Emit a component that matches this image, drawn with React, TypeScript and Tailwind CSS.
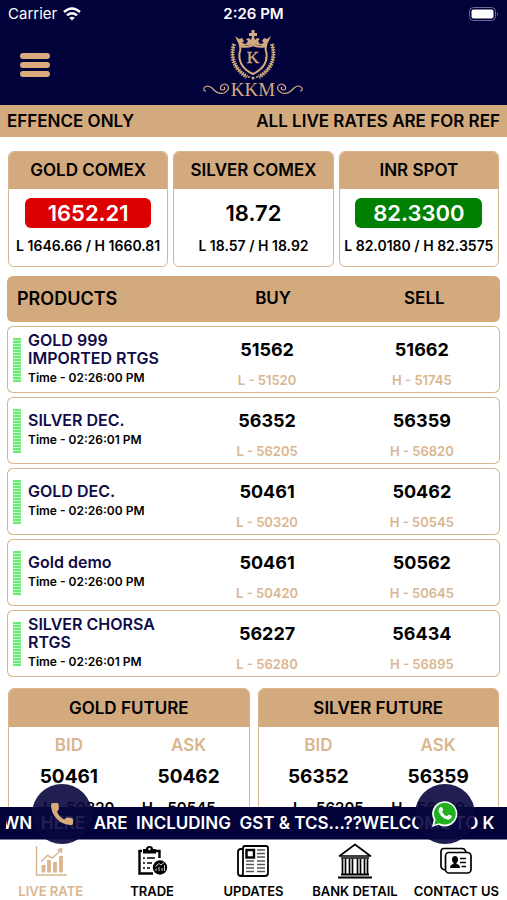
import type { ReactNode } from "react";

const rates = [
  { name: "GOLD COMEX", value: "1652.21", low: "1646.66", high: "1660.81", color: "bg-[#dd0000] text-white" },
  { name: "SILVER COMEX", value: "18.72", low: "18.57", high: "18.92", color: "text-black" },
  { name: "INR SPOT", value: "82.3300", low: "82.0180", high: "82.3575", color: "bg-[#008000] text-white" },
];

const products = [
  { name: "GOLD 999 IMPORTED RTGS", time: "02:26:00 PM", buy: "51562", sell: "51662", low: "51520", high: "51745" },
  { name: "SILVER DEC.", time: "02:26:01 PM", buy: "56352", sell: "56359", low: "56205", high: "56820" },
  { name: "GOLD DEC.", time: "02:26:00 PM", buy: "50461", sell: "50462", low: "50320", high: "50545" },
  { name: "Gold demo", time: "02:26:00 PM", buy: "50461", sell: "50562", low: "50420", high: "50645" },
  { name: "SILVER CHORSA RTGS", time: "02:26:01 PM", buy: "56227", sell: "56434", low: "56280", high: "56895" },
];

const futures = [
  { name: "GOLD FUTURE", bid: "50461", ask: "50462", low: "50320", high: "50545" },
  { name: "SILVER FUTURE", bid: "56352", ask: "56359", low: "56205", high: "56820" },
];

const Logo = () => (
  <svg viewBox="0 0 102 72" className="w-[102px] h-[72px]" fill="none" stroke="#d3aa7e" role="img" aria-label="KKM">
    {/* crown */}
    <path
      d="M38 18 L33 7 L37 10 L40 9 L42 12 L40 14 L44 15 L46 12 L44 10 L47 9 L49 11 L50 7 L47 7 V4 H49.500 V1 H52.500 V4 H55 V7 L52 7 L53 11 L55 9 L58 10 L56 12 L58 15 L62 14 L60 12 L62 9 L65 10 L69 7 L64 18 Q51 13 38 18Z"
      fill="#d3aa7e"
      stroke="none"
    />
    {/* shield */}
    <path d="M38 17 Q45 19 51 16 Q57 19 64 17 Q63 21 64.500 24 Q66 38 51 45 Q36 38 37.500 24 Q39 21 38 17Z" strokeWidth="2" />
    {/* wreath */}
    <path d="M32 15 Q26 36 45 48" strokeWidth="4" strokeDasharray="1.500 1" />
    <path d="M70 15 Q76 36 57 48" strokeWidth="4" strokeDasharray="1.500 1" />
    <path d="M32 15 Q26 36 45 48 M70 15 Q76 36 57 48" strokeWidth="1.2" />
    <circle cx="51" cy="49" r="1.5" fill="#d3aa7e" stroke="none" />
    <circle cx="47" cy="48" r="1" fill="#d3aa7e" stroke="none" />
    <circle cx="55" cy="48" r="1" fill="#d3aa7e" stroke="none" />
    <text x="51" y="34" textAnchor="middle" fontSize="17" fontFamily="Liberation Serif, serif" fill="#d3aa7e" stroke="#d3aa7e" strokeWidth="0.4">
      K
    </text>
    <text x="51" y="67" textAnchor="middle" fontSize="19" fontFamily="Liberation Serif, serif" fill="#d3aa7e" stroke="none">
      KKM
    </text>
    {/* flourishes */}
    <path
      d="M4 62 Q1 62 2 59 Q5 55 10 59 Q16 66 22 64 Q28 61 26 57 Q23 53 19 57 Q17 61 21 61 Q24 60 22 58"
      strokeWidth="1.2"
    />
    <path
      d="M98 62 Q101 62 100 59 Q97 55 92 59 Q86 66 80 64 Q74 61 76 57 Q79 53 83 57 Q85 61 81 61 Q78 60 80 58"
      strokeWidth="1.2"
    />
  </svg>
);

const WifiIcon = () => (
  <svg viewBox="0 0 18 14" className="w-[18px] h-[14px]" fill="none" stroke="white" strokeWidth="2.4">
    <path d="M1 5 Q9 -2 17 5" />
    <path d="M4 8.300 Q9 4 14 8.300" />
    <path d="M9 13.500 L6.200 10.800 Q9 8.500 11.800 10.800Z" fill="white" stroke="none" />
  </svg>
);

const BatteryIcon = () => (
  <svg viewBox="0 0 30 14" className="w-[30px] h-[14px]" fill="none">
    <rect x="0.500" y="0.500" width="26" height="13" rx="4" stroke="#6d6d92" />
    <rect x="2.500" y="2.500" width="22" height="9" rx="2" fill="white" />
    <path d="M28 5 Q30 7 28 9Z" fill="#6d6d92" />
  </svg>
);

const LiveRateIcon = () => (
  <svg viewBox="0 0 32 32" className="w-8 h-8" fill="none" stroke="currentColor">
    <path d="M1.500 1 V30 H32" strokeWidth="1.4" />
    <path d="M8.500 20 V27.500 M14 15 V27.500 M20 17 V27.500 M26 11 V27.500" strokeWidth="3.8" />
    <path d="M6 16.500 L12.500 10.500 L17.500 13 L25.500 5.500" strokeWidth="1.5" />
    <path d="M22 4.500 L27.500 2.500 L27 8.500Z" fill="currentColor" stroke="none" />
  </svg>
);

const TradeIcon = () => (
  <svg viewBox="0 0 32 32" className="w-8 h-8" fill="none" stroke="currentColor">
    <path d="M6 6 H3.500 V28.500 H17 M20 6 H23.500 V13" strokeWidth="2.4" />
    <path d="M7 8.500 V4 H10 Q10 1 13.500 1 Q17 1 17 4 H20 V8.500Z" fill="currentColor" stroke="none" />
    <circle cx="13.500" cy="4" r="1.2" fill="white" stroke="none" />
    <path d="M7 13 H9 M11 13 H19 M7 18 H9 M11 18 H16 M7 23 H9 M11 23 H14" strokeWidth="1.600" />
    <circle cx="24" cy="22.500" r="7.200" fill="currentColor" stroke="none" />
    <path d="M20 26 V23.500 M23 26 V22 M26 26 V23 M28.500 26 V20 M19.500 21.500 L23 18.500 L25 20 L28 17.500" stroke="white" strokeWidth="0.8" />
  </svg>
);

const UpdatesIcon = () => (
  <svg viewBox="0 0 32 32" className="w-8 h-8" fill="none" stroke="currentColor" strokeWidth="1.8">
    <path d="M6 4 H4 Q1 4 1 7 V28 Q1 31 4 31 H28 Q31 31 31 28 V3 Q31 1 29 1 H8 Q6 1 6 3 V28 Q6 31 3.500 31" />
    <rect x="9.500" y="5" width="7.500" height="7.500" strokeWidth="2.4" />
    <path
      d="M20 5 H28 M20 8.500 H28 M20 12 H28 M9 16 H17 M20 16 H28 M9 19.500 H17 M20 19.500 H28 M9 23 H17 M20 23 H28 M9 26.500 H17 M20 26.500 H28"
      stroke="#555"
      strokeWidth="1.300"
    />
  </svg>
);

const BankIcon = () => (
  <svg viewBox="0 0 34 36" className="w-[34px] h-9" fill="none" stroke="currentColor">
    <path d="M1.500 13 L17 1.500 L32.500 13 Z" strokeWidth="1.700" strokeLinejoin="round" />
    <path d="M3 15 H31" strokeWidth="1.500" />
    <path d="M4.500 16 V31 M7.500 16 V31 M11.500 16 V31 M14.500 16 V31 M19.500 16 V31 M22.500 16 V31 M26.500 16 V31 M29.500 16 V31" strokeWidth="1.700" />
    <path d="M3 31.500 H31 M0 34.500 H34" strokeWidth="1.800" />
  </svg>
);

const ContactIcon = () => (
  <svg viewBox="0 0 32 28" className="w-8 h-7" fill="none" stroke="currentColor" strokeWidth="1.7">
    <path d="M5 23 Q1 22 1 19 V4.500 Q1 1.500 4 1.500 H22 Q25 1.500 26 5" />
    <rect x="5.500" y="5.500" width="25.500" height="20.500" rx="3.500" />
    <ellipse cx="15" cy="12.500" rx="3" ry="3.500" fill="currentColor" stroke="none" />
    <path d="M10 21 Q10 17.500 13.500 17 V15 H16.500 V17 Q20 17.500 20 21Z" fill="currentColor" stroke="none" />
    <path d="M20 11.500 H26 M20 15.500 H26 M21.500 19.500 H26" strokeWidth="1.600" />
  </svg>
);

const PhoneIcon = () => (
  <svg viewBox="0 0 24 24" className="w-6 h-6" fill="#d9ab7c">
    <path d="M1 3 Q1 1 3 1 H7.500 Q8.500 1 8.500 3 L9 6 Q9 8 7 9.500 Q8 12.500 10.500 15 Q12.500 16.500 14.500 17.500 Q15.500 15.500 18 15.500 L21.500 16 Q23 16.500 23 18 V21.500 Q23 23.500 20 23 Q11 22 6 16 Q1 10 1 3Z" />
  </svg>
);

const WhatsAppIcon = () => (
  <svg viewBox="0 0 30 30" className="w-7 h-[30px]">
    <path d="M1 29 L3 21.500 A13.500 13.500 0 1 1 8 26.500Z" fill="white" />
    <path d="M3.500 26.500 L5 21 A11.700 11.700 0 1 1 9 24.800Z" fill="#1fb01f" />
    <path
      d="M10 7.500 Q11 7 12 8 L13 10.500 Q13 11.500 11.800 12.500 Q13.500 16 17 17.500 L18.700 15.800 Q19.200 15.500 22 17 Q22.500 17.500 22 19 Q20.500 21.500 17.500 20.800 Q11 19 8.500 13 Q7.500 9.500 10 7.500Z"
      fill="white"
    />
  </svg>
);

const tabs: { label: string; icon: ReactNode; active?: boolean }[] = [
  { label: "LIVE RATE", icon: <LiveRateIcon />, active: true },
  { label: "TRADE", icon: <TradeIcon /> },
  { label: "UPDATES", icon: <UpdatesIcon /> },
  { label: "BANK DETAIL", icon: <BankIcon /> },
  { label: "CONTACT US", icon: <ContactIcon /> },
];

const App = () => {
  return (
    <div className="h-screen flex flex-col overflow-hidden bg-white text-black font-['Inter',sans-serif]">
      <header className="shrink-0 bg-[#02023a]">
        <div className="grid grid-cols-3 items-center h-7 px-2 text-[15px] text-white">
          <div className="flex items-center gap-[6px]">
            Carrier
            <WifiIcon />
          </div>
          <div className="text-center font-semibold">2:26 PM</div>
          <div className="flex justify-end">
            <BatteryIcon />
          </div>
        </div>
        <div className="grid grid-cols-3 items-center h-[77px] px-5">
          <button type="button" aria-label="Menu" className="flex flex-col gap-[3px] w-[30px] mb-1">
            <span className="h-[6px] w-full rounded-full bg-[#d9ab7c]" />
            <span className="h-[6px] w-full rounded-full bg-[#d9ab7c]" />
            <span className="h-[6px] w-full rounded-full bg-[#d9ab7c]" />
          </button>
          <div className="flex justify-center mb-1">
            <Logo />
          </div>
        </div>
      </header>

      <div className="shrink-0 bg-[#d3aa7e] px-[7px]">
        <div className="flex justify-between overflow-hidden whitespace-nowrap text-[17px] leading-8 font-semibold">
          <span>EFFENCE ONLY</span>
          <span>ALL LIVE RATES ARE FOR REF</span>
        </div>
      </div>

      <main className="flex-1 min-h-0 overflow-hidden pt-[14px]">
        <section className="grid grid-cols-3 gap-[5px] px-2">
          {rates.map((rate) => (
            <div key={rate.name} className="rounded-md border border-[#d9b48c] overflow-hidden text-center whitespace-nowrap">
              <h2 className="bg-[#d3aa7e] text-[17px] leading-[37px] font-semibold">{rate.name}</h2>
              <p className={`mx-auto mt-[9px] w-4/5 rounded-md text-[22px] leading-[30px] font-semibold ${rate.color}`}>{rate.value}</p>
              <p className="pt-2 pb-[10px] text-sm leading-5 font-semibold">
                L {rate.low} / H {rate.high}
              </p>
            </div>
          ))}
        </section>

        <section className="px-[7px] mt-[5px]">
          <table className="w-full table-fixed border-separate border-spacing-x-0 border-spacing-y-1">
            <thead>
              <tr className="h-[46px] bg-[#d3aa7e] text-[17px] font-semibold">
                <th className="w-[37%] rounded-l-md pl-[10px] text-left text-lg font-semibold">PRODUCTS</th>
                <th className="pl-3 font-semibold">BUY</th>
                <th className="rounded-r-md pl-1 font-semibold">SELL</th>
              </tr>
            </thead>
            <tbody>
              {products.map((product) => (
                <tr key={product.name} className="h-[67px]">
                  <td className="rounded-l-md border border-r-0 border-[#d9b48c] pl-[5px] py-0">
                    <div className="flex items-center gap-[7px]">
                      <span className="shrink-0 w-2 h-11 bg-[repeating-linear-gradient(to_bottom,#69ec75_0_2px,#c4fac8_2px_3px)]" />
                      <div>
                        <p className="w-[140px] text-base leading-[18px] font-semibold text-[#100c48]">{product.name}</p>
                        <p className="text-xs leading-[21px] font-semibold whitespace-nowrap">Time - {product.time}</p>
                      </div>
                    </div>
                  </td>
                  <td className="border-y border-[#d9b48c] p-0 text-center">
                    <p className="text-lg leading-10 font-bold">{product.buy}</p>
                    <p className="text-[13px] leading-5 font-semibold text-[#d9b68f]">L - {product.low}</p>
                  </td>
                  <td className="rounded-r-md border border-l-0 border-[#d9b48c] p-0 text-center">
                    <p className="text-lg leading-10 font-bold">{product.sell}</p>
                    <p className="text-[13px] leading-5 font-semibold text-[#d9b68f]">H - {product.high}</p>
                  </td>
                </tr>
              ))}
            </tbody>
          </table>
        </section>

        <section className="grid grid-cols-2 gap-2 px-2 mt-[7px]">
          {futures.map((future) => (
            <div key={future.name} className="rounded-md border border-[#d9b48c] overflow-hidden text-center font-semibold">
              <h2 className="bg-[#d3aa7e] text-[17px] leading-[38px]">{future.name}</h2>
              <div className="grid grid-cols-2">
                <div>
                  <p className="text-[17px] leading-9 text-[#d9b68f]">BID</p>
                  <p className="text-[19px] leading-7 font-bold">{future.bid}</p>
                  <p className="text-[15px] leading-[34px] pl-5">L - {future.low}</p>
                </div>
                <div>
                  <p className="text-[17px] leading-9 text-[#d9b68f]">ASK</p>
                  <p className="text-[19px] leading-7 font-bold">{future.ask}</p>
                  <p className="text-[15px] leading-[34px] pr-5">H - {future.high}</p>
                </div>
              </div>
            </div>
          ))}
        </section>
      </main>

      <footer className="relative shrink-0">
        <div className="bg-[#02023a] px-[6px] border-b border-[#7c7c9c]">
          <p className="-indent-1 overflow-hidden whitespace-pre text-[17px] leading-8 font-semibold text-white">
            {"WN  HERE  ARE  INCLUDING  GST & TCS...??WELCOME TO K"}
          </p>
        </div>
        <a
          href="#call"
          aria-label="Call"
          className="absolute left-8 -top-[23px] flex items-center justify-center w-[60px] h-[60px] rounded-full bg-[#09073f]/90"
        >
          <PhoneIcon />
        </a>
        <a
          href="#whatsapp"
          aria-label="WhatsApp"
          className="absolute right-8 -top-[23px] flex items-center justify-center w-[60px] h-[60px] rounded-full bg-[#09073f]/90"
        >
          <WhatsAppIcon />
        </a>
        <nav className="grid grid-cols-5 h-[60px]">
          {tabs.map((tab) => (
            <a
              key={tab.label}
              href="#"
              className={`flex flex-col items-center text-[13px] font-semibold whitespace-nowrap ${tab.active ? "text-[#d9b68f]" : "text-black"}`}
            >
              <span className="flex h-[42px] items-center">{tab.icon}</span>
              <span className="leading-[18px]">{tab.label}</span>
            </a>
          ))}
        </nav>
      </footer>
    </div>
  );
};

export default App;
